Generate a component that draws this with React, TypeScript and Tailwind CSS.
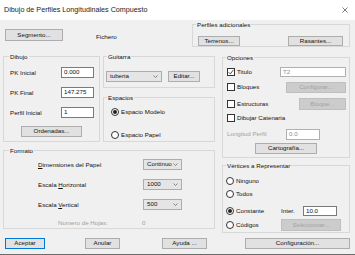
import React from "react";

const Chevron = () => (
  <svg width="5" height="3" viewBox="0 0 5 3" className="shrink-0">
    <path d="M0.5 0.5 L2.5 2.5 L4.5 0.5" fill="none" stroke="#606060" strokeWidth="0.7" />
  </svg>
);

const Btn = ({
  className = "",
  disabled,
  primary,
  children,
}: {
  className?: string;
  disabled?: boolean;
  primary?: boolean;
  children: React.ReactNode;
}) => (
  <div
    className={
      "flex items-center justify-center shrink-0 border leading-none " +
      (disabled
        ? "bg-[#cccccc] border-[#bfbfbf] text-[#a3a3a3] "
        : primary
        ? "bg-[#e1e1e1] border-[#0078d7] border-[1.5px] "
        : "bg-[#e1e1e1] border-[#adadad] ") +
      className
    }
  >
    {children}
  </div>
);

const Input = ({ className = "", value, muted }: { className?: string; value: string; muted?: boolean }) => (
  <div
    className={
      "flex items-center shrink-0 bg-white border border-[#7a7a7a] px-[2px] leading-none " +
      (muted ? "text-[#8c8c8c] border-[#b0b0b0] " : "") +
      className
    }
  >
    {value}
  </div>
);

const Select = ({ className = "", value }: { className?: string; value: string }) => (
  <div
    className={
      "flex items-center justify-between shrink-0 bg-[#e5e5e5] border border-[#adadad] pl-[3px] pr-[3px] leading-none " +
      className
    }
  >
    <span>{value}</span>
    <Chevron />
  </div>
);

const Check = ({ checked }: { checked?: boolean }) => (
  <div className="w-[8px] h-[8px] shrink-0 bg-white border border-[#333333] flex items-center justify-center">
    {checked && (
      <svg width="6" height="6" viewBox="0 0 6 6">
        <path d="M0.6 3.2 L2.3 4.9 L5.4 0.9" fill="none" stroke="#222" strokeWidth="0.8" />
      </svg>
    )}
  </div>
);

const Radio = ({ checked }: { checked?: boolean }) => (
  <div className="w-[8px] h-[8px] shrink-0 rounded-full bg-white border border-[#333333] flex items-center justify-center">
    {checked && <div className="w-[4px] h-[4px] rounded-full bg-[#222]" />}
  </div>
);

const Group = ({
  title,
  className = "",
  labelClass = "left-[3px]",
  children,
}: {
  title: string;
  className?: string;
  labelClass?: string;
  children?: React.ReactNode;
}) => (
  <div className={"relative shrink-0 border border-[#d8d8d8] " + className}>
    <span className={"absolute top-[-4px] px-[1px] bg-[#f0f0f0] leading-[7px] " + labelClass}>{title}</span>
    {children}
  </div>
);

export default function App() {
  return (
    <div
      className="w-[355px] h-[255px] overflow-hidden bg-[#f0f0f0] flex flex-col text-[6.2px] text-[#111] border-b border-[#6b6b6b]"
      style={{ fontFamily: '"Liberation Sans", Arial, sans-serif' }}
    >
      {/* title bar */}
      <div className="h-[20px] shrink-0 bg-white flex items-center justify-between pl-[4px] pr-[7px]">
        <span className="text-[7.2px] text-[#222]">Dibujo de Perfiles Longitudinales Compuesto</span>
        <svg width="6" height="6" viewBox="0 0 6 6">
          <path d="M0.5 0.5 L5.5 5.5 M5.5 0.5 L0.5 5.5" stroke="#444" strokeWidth="0.7" />
        </svg>
      </div>

      <div className="flex flex-col pl-[3px]">
        {/* top row */}
        <div className="flex mt-[4px] h-[23px]">
          <div className="w-[189px] flex items-start pt-[5px]">
            <Btn className="ml-[2px] w-[58px] h-[12px]">Segmento...</Btn>
            <span className="ml-[33px] mt-[3px]">Fichero</span>
          </div>
          <Group title="Perfiles adicionales" className="w-[158px] h-[23px]">
            <div className="flex justify-between pl-[5px] pr-[6px] pt-[11px]">
              <Btn className="w-[42px] h-[10px]">Terrenos...</Btn>
              <Btn className="w-[55px] h-[10px]">Rasantes...</Btn>
            </div>
          </Group>
        </div>

        {/* main */}
        <div className="flex mt-[9px] h-[177px]">
          <div className="w-[212px] flex flex-col">
            <div className="flex gap-[3px] h-[86px]">
              <Group title="Dibujo" className="w-[97px] h-[86px]" labelClass="left-[5px]">
                <div className="flex flex-col pt-[10px] pl-[6px]">
                  <div className="flex items-center h-[11px]">
                    <span className="w-[51px]">PK Inicial</span>
                    <Input className="w-[33px] h-[11px]" value="0.000" />
                  </div>
                  <div className="flex items-center h-[11px] mt-[9px]">
                    <span className="w-[51px]">PK Final</span>
                    <Input className="w-[33px] h-[11px]" value="147.275" />
                  </div>
                  <div className="flex items-center h-[11px] mt-[9px]">
                    <span className="w-[51px]">Perfil Inicial</span>
                    <Input className="w-[33px] h-[11px]" value="1" />
                  </div>
                  <Btn className="ml-[11px] mt-[8px] w-[61px] h-[11px]">Ordenadas...</Btn>
                </div>
              </Group>
              <div className="w-[112px] flex flex-col">
                <Group title="Guitarra" className="h-[32px]">
                  <div className="flex items-center pt-[14px] pl-[2px]">
                    <Select className="w-[56px] h-[11px]" value="tuberia" />
                    <Btn className="ml-[6px] w-[32px] h-[11px]">Editar...</Btn>
                  </div>
                </Group>
                <Group title="Espacios" className="mt-[9px] h-[45px]">
                  <div className="flex flex-col pt-[9px] pl-[7px]">
                    <div className="flex items-center gap-[2px] h-[9px]">
                      <Radio checked />
                      <span>Espacio Modelo</span>
                    </div>
                    <div className="flex items-center gap-[2px] h-[9px] mt-[14px]">
                      <Radio />
                      <span>Espacio Papel</span>
                    </div>
                  </div>
                </Group>
              </div>
            </div>
            <Group title="Formato" className="mt-[8px] h-[79px] w-[212px]" labelClass="left-[5px]">
              <div className="flex flex-col pt-[8px] pl-[34px]">
                <div className="flex items-center h-[11px]">
                  <span className="w-[105px]">
                    <u>D</u>imensiones del Papel
                  </span>
                  <Select className="w-[39px] h-[11px]" value="Continuo" />
                </div>
                <div className="flex items-center h-[11px] mt-[9px]">
                  <span className="w-[105px]">
                    Escala <u>H</u>orizontal
                  </span>
                  <Select className="w-[39px] h-[11px]" value="1000" />
                </div>
                <div className="flex items-center h-[11px] mt-[9px]">
                  <span className="w-[105px]">
                    Escala <u>V</u>ertical
                  </span>
                  <Select className="w-[39px] h-[11px]" value="500" />
                </div>
                <div className="flex items-center h-[9px] mt-[8px] pl-[20px] text-[#a0a0a0]">
                  <span className="w-[84px]">Numero de Hojas:</span>
                  <span>0</span>
                </div>
              </div>
            </Group>
          </div>

          <div className="ml-[7px] w-[128px] flex flex-col">
            <Group title="Opciones" className="mt-[1px] h-[101px]">
              <div className="flex flex-col pt-[8px] pl-[4px] pr-[3px]">
                <div className="flex items-center h-[12px]">
                  <Check checked />
                  <span className="ml-[2px]">Titulo</span>
                  <Input className="ml-auto w-[66px] h-[10px]" value="T2" muted />
                </div>
                <div className="flex items-center h-[12px] mt-[3px]">
                  <Check />
                  <span className="ml-[2px]">Bloques</span>
                  <Btn className="ml-auto w-[60px] h-[11px]" disabled>
                    Configurar...
                  </Btn>
                </div>
                <div className="flex items-center h-[12px] mt-[5px]">
                  <Check />
                  <span className="ml-[2px]">Estructuras</span>
                  <Btn className="ml-auto w-[47px] h-[12px]" disabled>
                    Bloque...
                  </Btn>
                </div>
                <div className="flex items-center h-[12px] mt-[2px]">
                  <Check />
                  <span className="ml-[2px]">Dibujar Catenaria</span>
                </div>
                <div className="flex items-center h-[12px] mt-[4px]">
                  <span className="w-[59px] text-[#a0a0a0]">Longitud Perfil</span>
                  <Input className="w-[34px] h-[11px]" value="0.0" muted />
                </div>
                <Btn className="ml-[28px] mt-[3px] w-[62px] h-[11px]">Cartografía...</Btn>
              </div>
            </Group>
            <Group title="Vértices a Representar" className="mt-[7px] h-[68px]">
              <div className="flex flex-col pt-[9px] pl-[3px]">
                <div className="flex items-center gap-[2px] h-[12px]">
                  <Radio />
                  <span>Ninguno</span>
                </div>
                <div className="flex items-center gap-[2px] h-[12px] mt-[1px]">
                  <Radio />
                  <span>Todos</span>
                </div>
                <div className="flex items-center h-[12px] mt-[5px]">
                  <div className="w-[55px] flex items-center gap-[2px]">
                    <Radio checked />
                    <span>Constante</span>
                  </div>
                  <span className="w-[22px]">Inter.</span>
                  <Input className="w-[34px] h-[10px]" value="10.0" />
                </div>
                <div className="flex items-center h-[12px] mt-[2px]">
                  <div className="w-[55px] flex items-center gap-[2px]">
                    <Radio />
                    <span>Códigos</span>
                  </div>
                  <Btn className="w-[60px] h-[12px]" disabled>
                    Seleccionar...
                  </Btn>
                </div>
              </div>
            </Group>
          </div>
        </div>

        {/* bottom buttons */}
        <div className="flex mt-[5px] h-[11px]">
          <Btn className="ml-[2px] w-[40px] h-[11px]" primary>
            Aceptar
          </Btn>
          <Btn className="ml-[40px] w-[35px] h-[11px]">Anular</Btn>
          <Btn className="ml-[42px] w-[45px] h-[11px]">Ayuda ...</Btn>
          <Btn className="ml-[38px] w-[105px] h-[11px]">Configuración...</Btn>
        </div>
      </div>
    </div>
  );
}
